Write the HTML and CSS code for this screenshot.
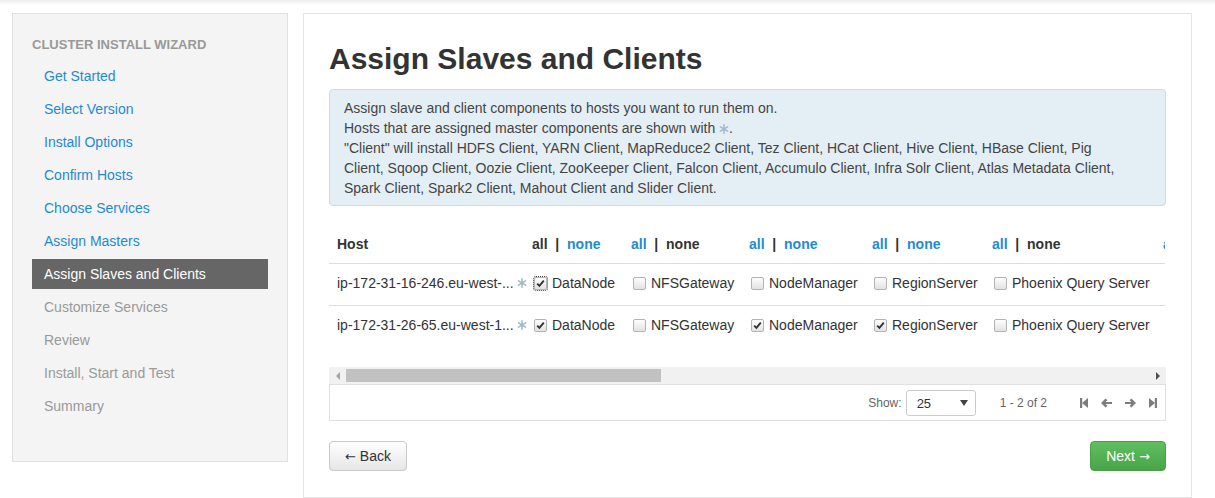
FILE: index.html
```html
<!DOCTYPE html>
<html>
<head>
<meta charset="utf-8">
<link rel="stylesheet" href="styles.css">
</head>
<body>
<div class="topshade"></div>
<div class="layout">
  <aside class="sidebar">
    <div class="side-title">Cluster Install Wizard</div>
    <ul class="nav">
      <li class="link">Get Started</li>
      <li class="link">Select Version</li>
      <li class="link">Install Options</li>
      <li class="link">Confirm Hosts</li>
      <li class="link">Choose Services</li>
      <li class="link">Assign Masters</li>
      <li class="active">Assign Slaves and Clients</li>
      <li class="disabled">Customize Services</li>
      <li class="disabled">Review</li>
      <li class="disabled">Install, Start and Test</li>
      <li class="disabled">Summary</li>
    </ul>
  </aside>
  <main class="panel">
    <h1 class="title">Assign Slaves and Clients</h1>
    <div class="alert">
      Assign slave and client components to hosts you want to run them on.<br>
      Hosts that are assigned master components are shown with <svg class="star" viewBox="0 0 10 10" width="10" height="10"><g stroke="currentColor" stroke-width="1.6" stroke-linecap="round"><line x1="5" y1="0.8" x2="5" y2="9.2"/><line x1="1.4" y1="2.9" x2="8.6" y2="7.1"/><line x1="1.4" y1="7.1" x2="8.6" y2="2.9"/></g><circle cx="5" cy="5" r="1.6" fill="currentColor"/></svg>.<br>
      "Client" will install HDFS Client, YARN Client, MapReduce2 Client, Tez Client, HCat Client, Hive Client, HBase Client, Pig Client, Sqoop Client, Oozie Client, ZooKeeper Client, Falcon Client, Accumulo Client, Infra Solr Client, Atlas Metadata Client, Spark Client, Spark2 Client, Mahout Client and Slider Client.
    </div>

    <div class="table-wrap">
      <table class="hosts">
        <colgroup>
          <col class="c-host"><col class="c1"><col class="c2"><col class="c3"><col class="c4"><col class="c5"><col class="c6">
        </colgroup>
        <thead>
          <tr>
            <th class="host-h">Host</th>
            <th><span class="cur">all</span>&nbsp;&nbsp;|&nbsp;&nbsp;<span class="lnk">none</span></th>
            <th><span class="lnk">all</span>&nbsp;&nbsp;|&nbsp;&nbsp;<span class="cur">none</span></th>
            <th><span class="lnk">all</span>&nbsp;&nbsp;|&nbsp;&nbsp;<span class="lnk">none</span></th>
            <th><span class="lnk">all</span>&nbsp;&nbsp;|&nbsp;&nbsp;<span class="lnk">none</span></th>
            <th><span class="lnk">all</span>&nbsp;&nbsp;|&nbsp;&nbsp;<span class="cur">none</span></th>
            <th><span class="lnk">all</span>&nbsp;&nbsp;|&nbsp;&nbsp;<span class="lnk">none</span></th>
          </tr>
        </thead>
        <tbody>
          <tr>
            <td class="host"><span class="hname">ip-172-31-16-246.eu-west-...</span><svg class="star" viewBox="0 0 10 10" width="10" height="10"><g stroke="currentColor" stroke-width="1.6" stroke-linecap="round"><line x1="5" y1="0.8" x2="5" y2="9.2"/><line x1="1.4" y1="2.9" x2="8.6" y2="7.1"/><line x1="1.4" y1="7.1" x2="8.6" y2="2.9"/></g><circle cx="5" cy="5" r="1.6" fill="currentColor"/></svg></td>
            <td><span class="cb on focus"><svg viewBox="0 0 11 11" width="11" height="11"><path d="M2.2 5.6 L4.4 7.9 L8.8 2.6" fill="none" stroke="#333" stroke-width="1.9"/></svg></span><span class="lbl">DataNode</span></td>
            <td><span class="cb"></span><span class="lbl">NFSGateway</span></td>
            <td><span class="cb"></span><span class="lbl">NodeManager</span></td>
            <td><span class="cb"></span><span class="lbl">RegionServer</span></td>
            <td><span class="cb"></span><span class="lbl">Phoenix Query Server</span></td>
            <td><span class="cb"></span><span class="lbl">Client</span></td>
          </tr>
          <tr>
            <td class="host"><span class="hname">ip-172-31-26-65.eu-west-1...</span><svg class="star" viewBox="0 0 10 10" width="10" height="10"><g stroke="currentColor" stroke-width="1.6" stroke-linecap="round"><line x1="5" y1="0.8" x2="5" y2="9.2"/><line x1="1.4" y1="2.9" x2="8.6" y2="7.1"/><line x1="1.4" y1="7.1" x2="8.6" y2="2.9"/></g><circle cx="5" cy="5" r="1.6" fill="currentColor"/></svg></td>
            <td><span class="cb on"><svg viewBox="0 0 11 11" width="11" height="11"><path d="M2.2 5.6 L4.4 7.9 L8.8 2.6" fill="none" stroke="#333" stroke-width="1.9"/></svg></span><span class="lbl">DataNode</span></td>
            <td><span class="cb"></span><span class="lbl">NFSGateway</span></td>
            <td><span class="cb on"><svg viewBox="0 0 11 11" width="11" height="11"><path d="M2.2 5.6 L4.4 7.9 L8.8 2.6" fill="none" stroke="#333" stroke-width="1.9"/></svg></span><span class="lbl">NodeManager</span></td>
            <td><span class="cb on"><svg viewBox="0 0 11 11" width="11" height="11"><path d="M2.2 5.6 L4.4 7.9 L8.8 2.6" fill="none" stroke="#333" stroke-width="1.9"/></svg></span><span class="lbl">RegionServer</span></td>
            <td><span class="cb"></span><span class="lbl">Phoenix Query Server</span></td>
            <td><span class="cb"></span><span class="lbl">Client</span></td>
          </tr>
        </tbody>
      </table>
    </div>

    <div class="hscroll">
      <span class="arr arr-l"></span>
      <div class="track"><div class="thumb"></div></div>
      <span class="arr arr-r"></span>
    </div>

    <div class="pager">
      <span class="show">Show:</span>
      <span class="select"><span>25</span><span class="caret"></span></span>
      <span class="count">1 - 2 of 2</span>
      <span class="pg-icons">
        <svg viewBox="0 0 8 10" width="8" height="10"><rect x="0" y="0" width="2.2" height="10"/><path d="M8 0 V10 L2 5 Z"/></svg>
        <svg viewBox="0 0 11 10" width="11" height="10"><path d="M0 5 L4.6 0.4 L6.4 2.2 L4.6 4 H11 V6 H4.6 L6.4 7.8 L4.6 9.6 Z"/></svg>
        <svg viewBox="0 0 11 10" width="11" height="10"><path d="M11 5 L6.4 0.4 L4.6 2.2 L6.4 4 H0 V6 H6.4 L4.6 7.8 L6.4 9.6 Z"/></svg>
        <svg viewBox="0 0 8 10" width="8" height="10"><rect x="5.8" y="0" width="2.2" height="10"/><path d="M0 0 V10 L6 5 Z"/></svg>
      </span>
    </div>

    <div class="actions">
      <button class="btn btn-back"><span class="barrow">&larr;</span> Back</button>
      <button class="btn btn-next">Next <span class="barrow">&rarr;</span></button>
    </div>
  </main>
</div>
</body>
</html>
```

FILE: styles.css
```css
* { box-sizing: border-box; }
html, body { margin: 0; padding: 0; background: #fff; }
body {
  font-family: "Liberation Sans", Arial, sans-serif;
  font-size: 14px;
  color: #333;
}
.topshade {
  height: 5px;
  background: linear-gradient(#eeeeee, #ffffff);
}
.layout {
  display: flex;
  align-items: flex-start;
  padding: 8px 0 0 12px;
  gap: 15px;
}
.sidebar {
  width: 276px;
  background: #f4f4f4;
  border: 1px solid #e1e1e1;
  padding: 21px 19px 40px;
}
.side-title {
  text-transform: uppercase;
  font-weight: bold;
  font-size: 13px;
  color: #999;
  line-height: 20px;
  margin-bottom: 6px;
}
.nav { list-style: none; margin: 0; padding: 0; }
.nav li {
  height: 30px;
  line-height: 30px;
  padding-left: 12px;
  margin-bottom: 3px;
}
.nav li:last-child { margin-bottom: 0; }
.nav .link { color: #1f8ad4; }
.nav .active { background: #666; color: #fff; }
.nav .disabled { color: #999; }

.panel {
  width: 889px;
  border: 1px solid #e4e4e4;
  padding: 0 25px 26px;
}
.title {
  font-size: 30px;
  line-height: 33px;
  font-weight: bold;
  color: #333;
  margin: 28px 0 14px;
}
.alert {
  background: #e4eff5;
  border: 1px solid #c9dde6;
  border-radius: 4px;
  padding: 8px 35px 7px 14px;
  line-height: 20px;
  color: #444;
}
.star { color: #a3b9c8; vertical-align: -1px; }

.table-wrap {
  margin-top: 20px;
  overflow: hidden;
  width: 836px;
}
.hosts {
  border-collapse: collapse;
  table-layout: fixed;
  width: 1067px;
}
.c-host { width: 203px; }
.c1 { width: 99px; }
.c2 { width: 118px; }
.c3 { width: 123px; }
.c4 { width: 120px; }
.c5 { width: 171px; }
.c6 { width: 233px; }
.hosts th {
  text-align: left;
  font-weight: bold;
  height: 37px;
  padding: 0;
  vertical-align: middle;
  white-space: nowrap;
  border-bottom: 1px solid #ddd;
}
.hosts th.host-h { padding-left: 8px; }
.hosts .lnk { color: #1f8ad4; }
.hosts .cur { color: #333; }
.hosts td {
  height: 42px;
  padding: 0 0 3px;
  vertical-align: middle;
  white-space: nowrap;
}
.hosts tbody tr:first-child td { border-bottom: 1px solid #ddd; }
.hosts td.host { padding-left: 8px; }
.hname {
  display: inline-block;
  width: 178px;
  overflow: hidden;
  white-space: nowrap;
  vertical-align: middle;
}
td.host .star { margin-left: 2px; vertical-align: middle; }
.cb {
  display: inline-block;
  width: 13px;
  height: 13px;
  border: 1px solid #b3b3b3;
  border-radius: 2px;
  background: linear-gradient(#fdfdfd, #e2e2e2);
  vertical-align: middle;
  margin: 0 5px 0 2px;
}
.cb svg { display: block; }
.cb.focus { outline: 1px dotted #444; outline-offset: 0; }
.lbl { vertical-align: middle; }

.hscroll {
  margin-top: 20px;
  height: 17px;
  background: #f1f1f1;
  display: flex;
  align-items: center;
}
.arr { width: 17px; height: 17px; display: flex; align-items: center; justify-content: center; }
.arr::before { content: ""; border-style: solid; }
.arr-l::before { border-width: 4px 4px 4px 0; border-color: transparent #a3a3a3 transparent transparent; }
.arr-r::before { border-width: 4px 0 4px 4px; border-color: transparent transparent transparent #505050; }
.track { flex: 1; height: 13px; }
.thumb { width: 315px; height: 13px; background: #c1c1c1; }

.pager {
  height: 37px;
  border: 1px solid #e0e0e0;
  display: flex;
  align-items: center;
  justify-content: flex-end;
  padding-right: 8px;
  font-size: 12px;
  color: #666;
}
.show { margin-right: 4px; }
.select {
  width: 70px;
  height: 26px;
  border: 1px solid #ccc;
  border-radius: 3px;
  display: flex;
  align-items: center;
  justify-content: space-between;
  padding: 2px 7px 0 10px;
  color: #333;
  font-size: 13px;
}
.caret {
  border-style: solid;
  border-width: 6px 4px 0 4px;
  border-color: #444 transparent transparent transparent;
  margin-top: -2px;
}
.count { margin-left: 24px; margin-right: 33px; }
.pg-icons { display: flex; align-items: center; gap: 13px; fill: #7d7d7d; }

.actions {
  margin-top: 20px;
  display: flex;
  justify-content: space-between;
}
.btn {
  font-family: "Liberation Sans", Arial, sans-serif;
  font-size: 14px;
  height: 30px;
  padding: 0 10px;
  border-radius: 4px;
  cursor: pointer;
  white-space: nowrap;
}
.barrow { font-family: "DejaVu Sans", sans-serif; font-size: 13px; }
.btn-back {
  width: 78px;
  color: #333;
  border: 1px solid #c9c9c9;
  background: linear-gradient(#ffffff, #e6e6e6);
}
.btn-next {
  width: 76px;
  color: #fff;
  border: 1px solid #4a9e4a;
  background: linear-gradient(#5fbf5f, #48a448);
}
```
